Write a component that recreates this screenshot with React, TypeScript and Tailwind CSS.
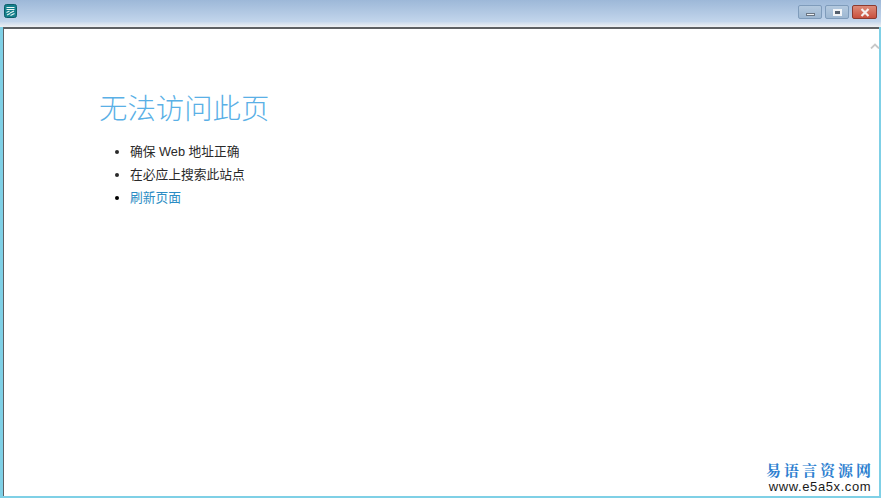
const cjk = "font-['Liberation_Sans','Noto_Sans_CJK_SC',sans-serif]";

function WindowButton({ children, className }: { children: React.ReactNode; className: string }) {
  return (
    <div className={`flex h-[14px] items-center justify-center rounded-[2px] border ${className}`}>
      {children}
    </div>
  );
}

export default function App() {
  return (
    <div className={`relative flex h-[498px] w-[881px] flex-col overflow-hidden bg-white ${cjk}`}>
      <div className="flex h-[22px] shrink-0 items-start justify-between bg-gradient-to-b from-[#9db8d8] to-[#c3d6ec] pl-[4px] pr-[4px] pt-[4px]">
        <svg width="13" height="14" viewBox="0 0 13 14">
          <rect x="0.5" y="0.5" width="12" height="13" rx="2" fill="#15808c" stroke="#0e5f6a" />
          <path d="M2.5 3.5h8M2.5 5.5h8" stroke="#e8f6f5" strokeWidth="1" />
          <path d="M2.5 8.5l3-1.5M6 9l4-2M3 11l3-1.5M6.5 11.5l4-2" stroke="#e8f6f5" strokeWidth="1.1" />
        </svg>
        <div className="mt-[1px] flex gap-[3px]">
          <WindowButton className="w-[24px] border-[#7f9cbb] bg-gradient-to-b from-[#b4c9df] to-[#9db7d2]">
            <div className="mt-[5px] h-[3px] w-[9px] border border-[#6b7683] bg-[#eef2f6]" />
          </WindowButton>
          <WindowButton className="w-[24px] border-[#7f9cbb] bg-gradient-to-b from-[#b4c9df] to-[#9db7d2]">
            <div className="h-[7px] w-[9px] border-2 border-[#f2f5f8] bg-[#55606e]" />
          </WindowButton>
          <WindowButton className="w-[25px] border-[#8c3b30] bg-gradient-to-b from-[#dc8a78] to-[#c9503e]">
            <svg width="10" height="9" viewBox="0 0 10 9">
              <path d="M1.5 1l7 7M8.5 1l-7 7" stroke="#f6f1ef" strokeWidth="2.2" />
            </svg>
          </WindowButton>
        </div>
      </div>
      <div className="h-[5px] shrink-0 bg-gradient-to-b from-[#c9d9ec] to-[#eef0f2]" />
      <div className="flex min-h-0 flex-1 flex-col border-b-[2px] border-l-[3px] border-r-[2px] border-[#7fd0e6] bg-white">
        <div className="flex-1 border-l border-t-2 border-[#5d6063] pl-[95px] pt-[62px]">
          <h1 className="text-[28.4px] leading-[36px] font-light text-[#5ab0e6]">无法访问此页</h1>
          <ul className="mt-[13px] list-disc pl-[31px] text-[12.75px] leading-[23px] text-[#2a2a2a]">
            <li>确保 Web 地址正确</li>
            <li>在必应上搜索此站点</li>
            <li className="marker:text-black">
              <span className="text-[#2b8cc4]">刷新页面</span>
            </li>
          </ul>
        </div>
      </div>
      <svg width="10" height="6" viewBox="0 0 10 6" className="absolute left-[870px] top-[43px]">
        <path d="M1 5.5L5 1.5L9 5.5" fill="none" stroke="#c8c8c8" strokeWidth="1.8" />
      </svg>
      <div className="absolute left-[767px] top-[462px] flex w-[106px] flex-col items-center gap-[2px] leading-none">
        <div className="font-['Noto_Serif_CJK_SC','Noto_Sans_CJK_SC',sans-serif] text-[15px] leading-[16px] font-bold tracking-[3px] whitespace-nowrap text-[#2d7fd0]">
          易语言资源网
        </div>
        <div className="text-[13px] leading-[13px] tracking-[0.6px] whitespace-nowrap text-[#1a1a1a]">www.e5a5x.com</div>
      </div>
    </div>
  );
}
